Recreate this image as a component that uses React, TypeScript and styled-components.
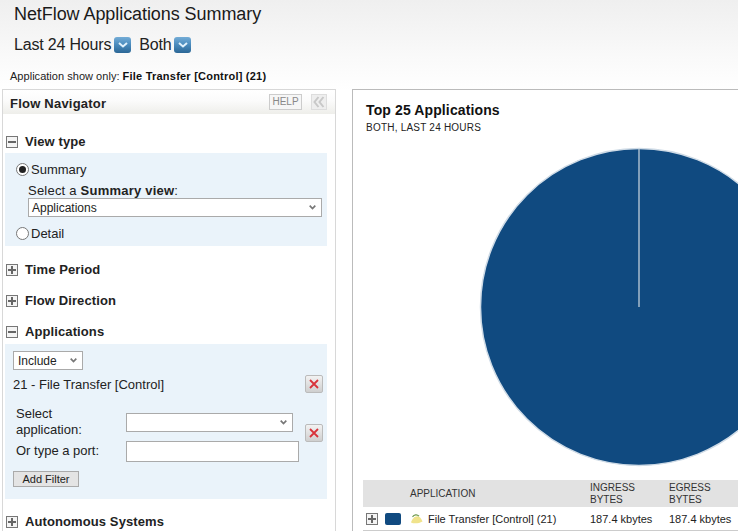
import React from "react";
import styled, { createGlobalStyle } from "styled-components";

const Global = createGlobalStyle`
  html, body { margin: 0; padding: 0; background: #fff; }
  body { width: 738px; height: 531px; overflow: hidden; font-family: "Liberation Sans", Arial, sans-serif; color: #111; }
`;
const Page = styled.div`
  width: 738px; height: 531px; overflow: hidden;
  background: linear-gradient(#efefef 0, #fafafa 60px, #ffffff 90px);
`;
const Header = styled.header`
  height: 89px; box-sizing: border-box; padding: 3px 0 0 14px;
`;
const Title = styled.h1`
  margin: 0; font-size: 18px; line-height: 22px; font-weight: 400; color: #1a1a1a; letter-spacing: -0.07px;
`;
const Filters = styled.div`
  display: flex; align-items: center; margin-top: 9px; font-size: 16px; line-height: 22px; color: #222; letter-spacing: -0.18px;
`;
const DropButton = styled.span<{ $gap: number }>`
  width: 17px; height: 16px; border-radius: 3px; margin: 0 ${(p) => p.$gap}px 0 3px;
  background: linear-gradient(#74acd6 0, #4c8dbf 45%, #2b6796 100%); display: inline-flex; align-items: center; justify-content: center;
`;
const ShowOnly = styled.div`
  margin: 13px 0 0 -4px; font-size: 11px; line-height: 14px; color: #222; letter-spacing: .03px;
  b { color: #111; letter-spacing: .22px; }
`;
const Columns = styled.div`
  display: flex; align-items: flex-start; padding-left: 2px; gap: 16px; width: 900px;
`;
const Nav = styled.aside`
  width: 334px; height: 460px; box-sizing: border-box; flex-shrink: 0;
  border: 1px solid #d8d8d8; background: #fff;
`;
const NavHead = styled.div`
  height: 24px; display: flex; align-items: center; padding: 2px 8px 0 7px; box-sizing: border-box; margin-bottom: 20px;
  background: linear-gradient(#ffffff 0, #fbfbfb 45%, #eeeeea 100%);
`;
const NavTitle = styled.span`
  flex: 1; font-size: 13px; font-weight: 700; color: #222; letter-spacing: .22px;
`;
const HelpBox = styled.span`
  width: 33px; height: 16px; box-sizing: border-box; border: 1px solid #ccc; background: #f6f6f6; color: #888;
  font-size: 10px; line-height: 14px; text-align: center; margin: -2px 9px 0 0;
`;
const CollapseBox = styled.span`
  width: 16px; height: 16px; box-sizing: border-box; border: 1px solid #ddd; background: #eee;
  display: flex; align-items: center; justify-content: center; margin-top: -2px;
`;
const SectionHead = styled.div<{ $mt?: number }>`
  display: flex; align-items: center; height: 15px; margin: ${(p) => p.$mt ?? 0}px 0 0 3px; gap: 7px;
  font-size: 13px; font-weight: 700; color: #222; letter-spacing: .1px;
`;
const ToggleBox = styled.svg`
  width: 12px; height: 12px; flex-shrink: 0;
`;
const Panel = styled.div<{ $h: number; $mt?: number }>`
  box-sizing: border-box; height: ${(p) => p.$h}px; width: 322px; margin: ${(p) => p.$mt ?? 4}px 0 0 2px;
  background: #eaf3fa; font-size: 13px; color: #222;
`;
const ViewPanel = styled(Panel)`
  padding-top: 9px;
`;
const AppsPanel = styled(Panel)`
  padding: 7px 0 0 8px;
`;
const RadioRow = styled.label`
  display: flex; align-items: center; font-size: 13px; height: 15px; padding-left: 11px; gap: 2px;
`;
const Radio = styled.span<{ $on?: boolean }>`
  width: 13px; height: 13px; box-sizing: border-box; border-radius: 50%; border: 1px solid #777; background: #fff;
  display: flex; align-items: center; justify-content: center;
  &::after { content: ""; width: 7px; height: 7px; border-radius: 50%; background: ${(p) => (p.$on ? "#222" : "transparent")}; }
`;
const FieldLabel = styled.div`
  margin: 7px 0 0 23px; font-size: 13px; line-height: 14px; letter-spacing: .22px;
`;
const Select = styled.div<{ $w: number }>`
  width: ${(p) => p.$w}px; height: 19px; box-sizing: border-box; background: #fff; border: 1px solid #aaa;
  display: flex; align-items: center; padding: 0 5px 0 3px; font-size: 12px; color: #222;
  span { flex: 1; }
`;
const ViewSelect = styled(Select)`
  margin: 0 0 9px 23px;
`;
const IncludeSelect = styled(Select)`
  padding-left: 4px;
`;
const AppRow = styled.div`
  display: flex; justify-content: space-between; align-items: center; padding-right: 4px; margin-top: 5px; font-size: 13px; height: 18px;
`;
const RemoveButton = styled.span`
  width: 18px; height: 18px; box-sizing: border-box; border: 1px solid #bbb; border-radius: 2px;
  background: linear-gradient(#f2f2f2, #cfcfcf); display: flex; align-items: center; justify-content: center;
`;
const FormRemove = styled(RemoveButton)`
  align-self: start; margin: 17px 0 0 12px;
`;
const AppForm = styled.div`
  display: grid; grid-template-columns: 110px 167px 30px; grid-template-rows: 30px 28px; margin: 14px 0 0 3px; font-size: 13px; line-height: 16px;
  align-items: center;
`;
const PortInput = styled.div`
  width: 173px; height: 21px; box-sizing: border-box; background: #fff; border: 1px solid #aaa;
`;
const FilterButton = styled.span`
  display: block; width: 66px; height: 16px; box-sizing: border-box; margin-top: 6px; border: 1px solid #aaa;
  background: #e4e4e4; font-size: 11px; line-height: 14px; text-align: center; color: #222;
`;
const Main = styled.main`
  width: 500px; height: 460px; box-sizing: border-box; flex-shrink: 0; border: 1px solid #bbb; border-right: 0; background: #fff; padding: 12px 0 0 13px;
`;
const ChartTitle = styled.h2`
  margin: 0; font-size: 14px; line-height: 16px; font-weight: 700; color: #111; letter-spacing: .12px;
`;
const ChartSub = styled.div`
  font-size: 10px; line-height: 12px; margin-top: 4px; color: #222; letter-spacing: .22px;
`;
const Pie = styled.svg`
  display: block; width: 322px; height: 322px; margin: 13px 0 0 112px;
`;
const Table = styled.div`
  width: 400px; margin: 11px 0 0 -3px; font-size: 10px; color: #333;
`;
const HeadRow = styled.div`
  display: grid; grid-template-columns: 47px 180px 79px 1fr; height: 27px; background: #e2e2e2; align-items: center; line-height: 12px;
`;
const BodyRow = styled.div`
  display: grid; grid-template-columns: 47px 180px 79px 1fr; height: 23px; align-items: center; border-bottom: 1px solid #ccc; font-size: 11px; color: #222;
`;
const RowLead = styled.div`
  display: flex; align-items: center; padding-left: 3px; gap: 7px;
`;
const Swatch = styled.span`
  width: 16px; height: 12px; border-radius: 2px; background: #104a80;
`;
const RowName = styled.div`
  display: flex; align-items: center; gap: 5px; margin-left: 0;
`;

const Toggle = ({ open }: { open?: boolean }) => (
  <ToggleBox viewBox="0 0 12 12">
    <rect x=".5" y=".5" width="11" height="11" fill="#f4f4f4" stroke="#777" />
    <rect x="2" y="5" width="8" height="2" fill="#666" />
    {!open && <rect x="5" y="2" width="2" height="8" fill="#666" />}
  </ToggleBox>
);
const Chevron = ({ color = "#777" }: { color?: string }) => (
  <svg width="7" height="5" viewBox="0 0 7 5"><path d="M.7.7l2.8 2.8L6.3.7" fill="none" stroke={color} strokeWidth="1.7" /></svg>
);
const DropChevron = () => (
  <svg width="10" height="6" viewBox="0 0 10 6"><path d="M1 1l4 3.5L9 1" fill="none" stroke="#dff0fb" strokeWidth="2" /></svg>
);
const XIcon = () => (
  <svg width="10" height="10" viewBox="0 0 10 10"><path d="M1 1l8 8M9 1l-8 8" stroke="#d8323a" strokeWidth="1.8" /></svg>
);
const DoubleLeft = () => (
  <svg width="12" height="12" viewBox="0 0 12 12"><path d="M5.5 1L1.5 6l4 5M10.5 1l-4 5 4 5" fill="none" stroke="#c8c8c8" strokeWidth="2" /></svg>
);
const FileIcon = () => (
  <svg width="13" height="12" viewBox="0 0 13 12">
    <path d="M1 9.5C2 6 4.5 3 7.5 3.2 10 3.4 11.5 6 12.5 8.5 9 10.5 4 11 1 9.5z" fill="#f0e38c" />
    <path d="M2.5 3.8C4 1.8 7 1 9 3.2" fill="none" stroke="#6f9a4e" strokeWidth="1.2" />
  </svg>
);

export default function App() {
  return (
    <Page>
      <Global />
      <Header>
        <Title>NetFlow Applications Summary</Title>
        <Filters>
          Last 24 Hours
          <DropButton $gap={8}><DropChevron /></DropButton>
          Both
          <DropButton $gap={0}><DropChevron /></DropButton>
        </Filters>
        <ShowOnly>Application show only: <b>File Transfer [Control] (21)</b></ShowOnly>
      </Header>
      <Columns>
        <Nav>
          <NavHead>
            <NavTitle>Flow Navigator</NavTitle>
            <HelpBox>HELP</HelpBox>
            <CollapseBox><DoubleLeft /></CollapseBox>
          </NavHead>
          <SectionHead><Toggle open />View type</SectionHead>
          <ViewPanel $h={93}>
            <RadioRow><Radio $on />Summary</RadioRow>
            <FieldLabel>Select a <b>Summary view</b>:</FieldLabel>
            <ViewSelect $w={294}><span>Applications</span><Chevron /></ViewSelect>
            <RadioRow><Radio />Detail</RadioRow>
          </ViewPanel>
          <SectionHead $mt={16}><Toggle />Time Period</SectionHead>
          <SectionHead $mt={16}><Toggle />Flow Direction</SectionHead>
          <SectionHead $mt={16}><Toggle open />Applications</SectionHead>
          <AppsPanel $h={155} $mt={5}>
            <IncludeSelect $w={70}><span>Include</span><Chevron /></IncludeSelect>
            <AppRow>21 - File Transfer [Control]<RemoveButton><XIcon /></RemoveButton></AppRow>
            <AppForm>
              <span>Select<br />application:</span>
              <Select $w={167}><span /><Chevron /></Select>
              <FormRemove><XIcon /></FormRemove>
              <span>Or type a port:</span>
              <PortInput />
            </AppForm>
            <FilterButton>Add Filter</FilterButton>
          </AppsPanel>
          <SectionHead $mt={15}><Toggle />Autonomous Systems</SectionHead>
        </Nav>
        <Main>
          <ChartTitle>Top 25 Applications</ChartTitle>
          <ChartSub>BOTH, LAST 24 HOURS</ChartSub>
          <Pie viewBox="0 0 322 322">
            <circle cx="161" cy="160" r="158.5" fill="#104a80" stroke="#cfdbe6" strokeWidth="1.5" />
            <path d="M161 2V160" stroke="#a9bccd" strokeWidth="1.5" />
          </Pie>
          <Table>
            <HeadRow>
              <span />
              <span>APPLICATION</span>
              <span>INGRESS<br />BYTES</span>
              <span>EGRESS<br />BYTES</span>
            </HeadRow>
            <BodyRow>
              <RowLead><Toggle /><Swatch /></RowLead>
              <RowName>
                <FileIcon />
                File Transfer [Control] (21)
              </RowName>
              <span>187.4 kbytes</span>
              <span>187.4 kbytes</span>
            </BodyRow>
          </Table>
        </Main>
      </Columns>
    </Page>
  );
}
